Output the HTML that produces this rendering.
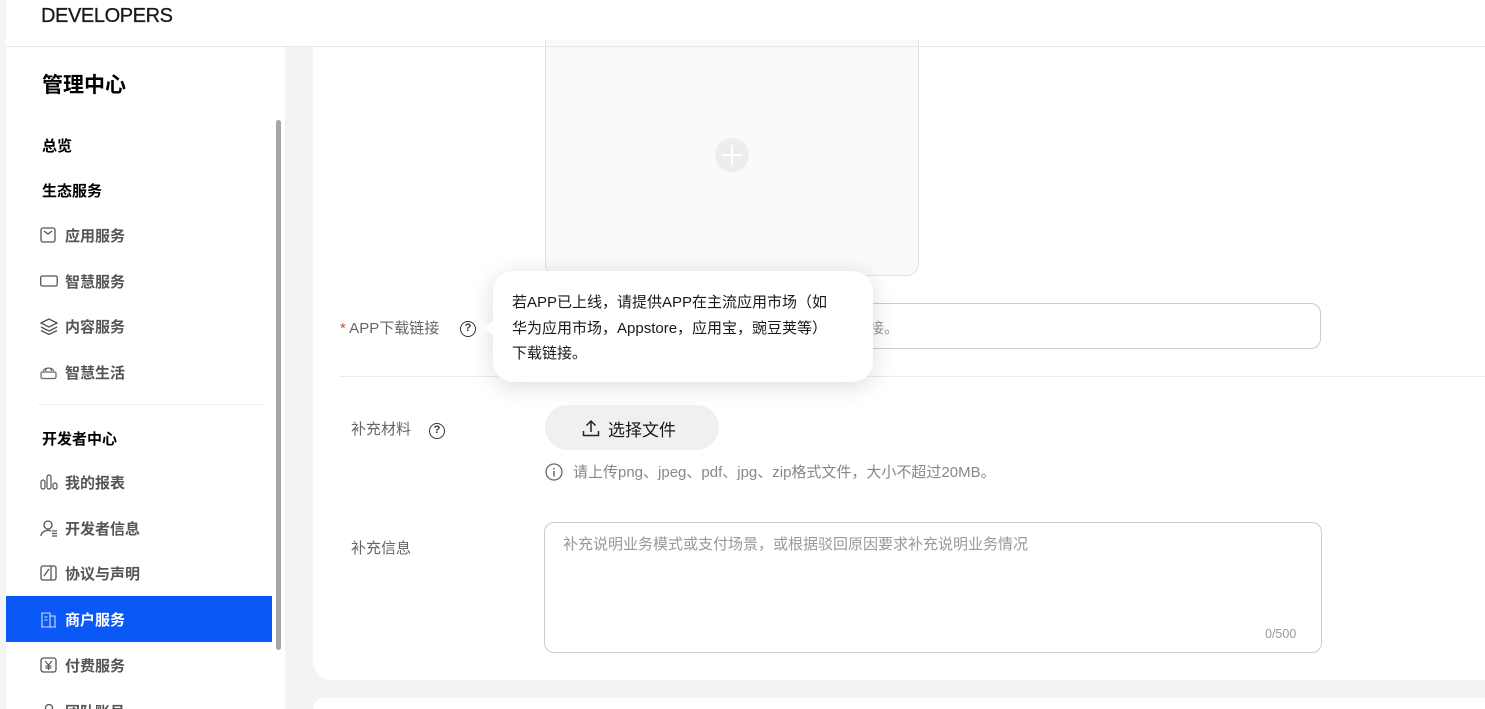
<!DOCTYPE html>
<html style="height:709px;overflow:hidden"><head><meta charset="utf-8">
<style>
*{box-sizing:border-box;margin:0;padding:0}
body{width:1485px;height:709px;overflow:hidden;background:#f1f3f5;font-family:"Liberation Sans","Noto Sans CJK SC",sans-serif;position:relative;color:#191919}
.abs{position:absolute}
#strip{left:0;top:0;width:6px;height:709px;background:#f5f5f5}
#hdr{left:6px;top:0;width:1479px;height:47px;background:#fff;border-bottom:1px solid #e8e8e8}
#hdr span{position:absolute;left:35px;top:5px;font-size:20px;letter-spacing:-0.4px;color:#1a1a1a;-webkit-text-stroke:0.3px #1a1a1a}
#side{left:6px;top:47px;width:279px;height:662px;background:#fff;overflow:hidden}
.t{position:absolute;left:36px;font-size:15px;font-weight:bold;color:#000}
.it{position:absolute;left:0;width:266px;height:46px;font-size:15px;color:#555;font-weight:bold}
.it span{position:absolute;left:59px;top:13px}
.it svg{position:absolute;left:34px;top:15px}
.act{background:#0a59f7;color:#fff}
#sb{left:276px;top:120px;width:5px;height:530px;background:#a6a6a6;border-radius:3px}
#card{left:313px;top:47px;width:1200px;height:633px;background:#fff;border-radius:0 0 0 18px}
#card2{left:313px;top:698px;width:1200px;height:11px;background:#fff;border-radius:18px 0 0 0}
.lbl{position:absolute;font-size:15px;color:#666}
.q{display:inline-block;width:16px;height:16px;border:1.5px solid #333;border-radius:50%;font-size:11px;text-align:center;line-height:13px;color:#333;font-weight:bold}
</style></head><body>
<div class="abs" id="strip"></div>
<div class="abs" id="hdr"><span>DEVELOPERS</span></div>
<div class="abs" id="side">
 <div class="t" style="top:22px;font-size:21px">管理中心</div>
 <div class="t" style="top:88px">总览</div>
 <div class="t" style="top:133px">生态服务</div>
 <div class="it" style="top:165px"><svg width="16" height="16"><rect x="1" y="1" width="14" height="14" rx="2" fill="none" stroke="#555" stroke-width="1.3"/><path d="M4 4l4 3 4-3" fill="none" stroke="#555" stroke-width="1.3"/></svg><span>应用服务</span></div>
 <div class="it" style="top:211px"><svg width="18" height="16"><rect x="0.7" y="3" width="16.5" height="10" rx="1.5" fill="none" stroke="#555" stroke-width="1.3"/></svg><span>智慧服务</span></div>
 <div class="it" style="top:256px"><svg width="18" height="17"><path d="M9 1L1 5l8 4 8-4z M1 9l8 4 8-4 M1 12.5l8 4 8-4" fill="none" stroke="#555" stroke-width="1.3"/></svg><span>内容服务</span></div>
 <div class="it" style="top:302px"><svg width="17" height="16"><path d="M3 7a6 5 0 0 1 11 0M5.5 7a3 3 0 0 1 6 0" fill="none" stroke="#666" stroke-width="1.2"/><rect x="1" y="8" width="15" height="6.5" rx="1.5" fill="none" stroke="#666" stroke-width="1.2"/></svg><span>智慧生活</span></div>
 <div style="position:absolute;left:32px;top:357px;width:226px;height:1px;background:#eee"></div>
 <div class="t" style="top:381px">开发者中心</div>
 <div class="it" style="top:412px"><svg width="18" height="16"><rect x="1" y="6" width="4" height="9" rx="2" fill="none" stroke="#555" stroke-width="1.2"/><rect x="7" y="1" width="4" height="14" rx="2" fill="none" stroke="#555" stroke-width="1.2"/><rect x="13" y="9" width="4" height="6" rx="2" fill="none" stroke="#555" stroke-width="1.2"/></svg><span>我的报表</span></div>
 <div class="it" style="top:458px"><svg width="18" height="17"><circle cx="8" cy="5" r="4" fill="none" stroke="#555" stroke-width="1.3"/><path d="M1 16a7 6 0 0 1 10-5M12 11h5M12 13.5h5M12 16h5" fill="none" stroke="#555" stroke-width="1.3"/></svg><span>开发者信息</span></div>
 <div class="it" style="top:503px"><svg width="17" height="16"><rect x="1" y="1" width="15" height="14" rx="2" fill="none" stroke="#555" stroke-width="1.3"/><path d="M11 1v14M4 11l5-7" fill="none" stroke="#555" stroke-width="1.3"/></svg><span>协议与声明</span></div>
 <div class="it act" style="top:549px;color:#fff"><svg width="17" height="17"><path d="M2 16V2h8v14M10 5h5v11M1 16h15M4.5 6h3M4.5 9h3" fill="none" stroke="#fff" stroke-width="1.1" opacity=".8"/></svg><span>商户服务</span></div>
 <div class="it" style="top:595px"><svg width="17" height="16"><rect x="1" y="1" width="15" height="14" rx="2.5" fill="none" stroke="#555" stroke-width="1.3"/><path d="M5 4l3.5 4 3.5-4M8.5 8v5M5.5 9h6M5.5 11h6" fill="none" stroke="#555" stroke-width="1.2"/></svg><span>付费服务</span></div>
 <div class="it" style="top:641px"><svg width="17" height="16"><circle cx="9" cy="5" r="3.5" fill="none" stroke="#555" stroke-width="1.3"/></svg><span>团队账号</span></div>
</div>
<div class="abs" id="sb"></div>
<div class="abs" id="card"></div>
<div class="abs" id="card2"></div>
<div class="abs" style="left:545px;top:40px;width:374px;height:236px;background:#fafafa;border:1px solid #e3e3e3;border-radius:0 0 12px 12px;border-top:none"></div>
<div class="abs" style="left:545px;top:46px;width:374px;height:1px;background:#e8e8e8"></div>
<div class="abs" style="left:715px;top:138px;width:34px;height:34px;border-radius:50%;background:#ededed"></div>
<div class="abs" style="left:731px;top:145px;width:2px;height:20px;background:#fff"></div>
<div class="abs" style="left:722px;top:154px;width:20px;height:2px;background:#fff"></div>
<div class="lbl" style="left:340px;top:317px"><span style="color:#e84026">*</span> APP下载链接</div>
<div class="abs" style="left:460px;top:318px"><span class="q">?</span></div>
<div class="abs" style="left:544px;top:303px;width:777px;height:46px;border:1px solid #ccc;border-radius:10px"></div>
<div class="abs" style="left:869px;top:317px;font-size:15px;color:#999">接。</div>
<div class="abs" style="left:340px;top:376px;width:1145px;height:1px;background:#ececec"></div>
<div class="abs" style="left:493px;top:271px;width:380px;height:111px;background:#fff;border-radius:20px;box-shadow:0 4px 24px rgba(0,0,0,.14)"></div>
<div class="abs" style="left:484px;top:320px;width:0;height:0;border-top:8px solid transparent;border-bottom:8px solid transparent;border-right:10px solid #fff"></div>
<div class="abs" style="left:512px;top:290px;white-space:nowrap;font-size:15px;line-height:25.5px;color:#191919">若APP已上线，请提供APP在主流应用市场（如<br>华为应用市场，Appstore，应用宝，豌豆荚等）<br>下载链接。</div>
<div class="lbl" style="left:351px;top:418px">补充材料</div>
<div class="abs" style="left:429px;top:420px"><span class="q">?</span></div>
<div class="abs" style="left:545px;top:405px;width:174px;height:45px;border-radius:23px;background:#f0f0f0"></div>
<svg class="abs" style="left:582px;top:419px" width="18" height="18"><path d="M9 13V2M4.5 6.5L9 2l4.5 4.5M1.5 12v4.5h15V12" fill="none" stroke="#222" stroke-width="1.5"/></svg>
<div class="abs" style="left:608px;top:416px;font-size:17px;color:#191919">选择文件</div>
<svg class="abs" style="left:545px;top:463px" width="18" height="18"><circle cx="9" cy="9" r="8" fill="none" stroke="#666" stroke-width="1.3"/><path d="M9 8v5.5M9 5v1.5" stroke="#666" stroke-width="1.5"/></svg>
<div class="abs" style="left:573px;top:461px;font-size:15px;color:#888">请上传png、jpeg、pdf、jpg、zip格式文件，大小不超过20MB。</div>
<div class="lbl" style="left:351px;top:537px">补充信息</div>
<div class="abs" style="left:544px;top:522px;width:778px;height:131px;border:1px solid #ccc;border-radius:10px"></div>
<div class="abs" style="left:563px;top:533px;font-size:15px;color:#999">补充说明业务模式或支付场景，或根据驳回原因要求补充说明业务情况</div>
<div class="abs" style="left:1265px;top:627px;font-size:12.5px;color:#999">0/500</div>
</body></html>
